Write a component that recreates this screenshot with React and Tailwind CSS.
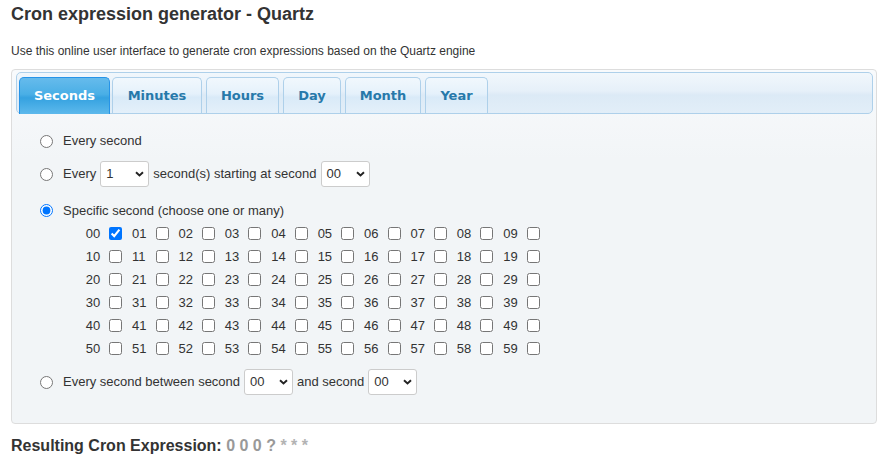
import React from 'react';

const tabs = [
  { name: 'Seconds', w: 'w-[91px]', ml: '' },
  { name: 'Minutes', w: 'w-[90px]', ml: 'ml-[2px]' },
  { name: 'Hours', w: 'w-[73px]', ml: 'ml-[4px]' },
  { name: 'Day', w: 'w-[58px]', ml: 'ml-[4px]' },
  { name: 'Month', w: 'w-[76px]', ml: 'ml-[4px]' },
  { name: 'Year', w: 'w-[63px]', ml: 'ml-[4px]' },
];

function Select({ value }) {
  return (
    <div className="mx-[4px] flex h-[26px] w-[49px] items-center justify-between rounded-[3px] border border-[#cccccc] bg-white pl-[5px] pr-[4px] text-[13px] text-[#333]">
      <span>{value}</span>
      <svg width="9" height="6" viewBox="0 0 9 6">
        <path d="M1 1.2l3.5 3.3L8 1.2" fill="none" stroke="#222" strokeWidth="1.9" />
      </svg>
    </div>
  );
}

function App() {
  const pad = (n) => String(n).padStart(2, '0');
  const rows = [0, 1, 2, 3, 4, 5];

  return (
    <div className="min-h-screen bg-white pl-[11px] font-['Liberation_Sans',Arial,sans-serif] text-[#333]">
      <h1 className="mt-[4px] h-[20px] text-[18px] font-bold leading-[20px]">
        Cron expression generator - Quartz
      </h1>
      <p className="mt-[20px] h-[14px] text-[12px] leading-[14px]">
        Use this online user interface to generate cron expressions based on the Quartz engine
      </p>

      <div className="mt-[11px] w-[866px] rounded-[4px] border border-[#dddddd] bg-[linear-gradient(#f8fafc,#f2f5f7_90px,#f2f5f7)] px-[3.5px] pt-[2px]">
        {/* tab header */}
        <div className="flex h-[42px] rounded-[5px] border border-[#aed0ea] bg-[linear-gradient(#f1f7fc,#e6f0f9_45%,#dceaf6_55%,#e2eef8)] pl-[2.5px] pt-[4px]">
          {tabs.map((t, i) =>
            i === 0 ? (
              <div
                key={t.name}
                className={`${t.w} ${t.ml} z-10 -mb-[1px] flex h-[37px] items-center justify-center rounded-t-[5px] border border-b-0 border-[#2694e8] bg-[linear-gradient(#66bbec,#4aafe6_45%,#35a2e0_55%,#5db9ec)] font-['DejaVu_Sans',Verdana,sans-serif] text-[13px] font-bold text-white`}
              >
                {t.name}
              </div>
            ) : (
              <div
                key={t.name}
                className={`${t.w} ${t.ml} flex h-[36px] items-center justify-center rounded-t-[5px] border border-b-0 border-[#aed0ea] bg-[linear-gradient(#f1f8fd,#e5f1fb_45%,#d9eaf8_55%,#e4f0fa)] font-['DejaVu_Sans',Verdana,sans-serif] text-[13px] font-bold text-[#2779aa]`}
              >
                {t.name}
              </div>
            )
          )}
        </div>

        {/* panel content */}
        <div className="pb-[28px] pl-[24.5px] pt-[14px] text-[13px]">
          <label className="flex h-[26px] items-center">
            <input type="radio" name="sec" className="h-[13px] w-[13px]" />
            <span className="ml-[10px]">Every second</span>
          </label>

          <label className="mt-[7px] flex h-[26px] items-center">
            <input type="radio" name="sec" className="h-[13px] w-[13px]" />
            <span className="ml-[10px]">Every</span>
            <Select value="1" />
            <span>second(s) starting at second</span>
            <Select value="00" />
          </label>

          <label className="mt-[12px] flex h-[23px] items-center">
            <input type="radio" name="sec" defaultChecked className="h-[13px] w-[13px]" />
            <span className="ml-[10px]">Specific second (choose one or many)</span>
          </label>

          <div className="ml-[45.7px] grid grid-cols-[repeat(10,46.4px)]">
            {rows.map((r) =>
              [0, 1, 2, 3, 4, 5, 6, 7, 8, 9].map((c) => {
                const n = r * 10 + c;
                return (
                  <label key={n} className="flex h-[23px] items-center">
                    <span className="w-[23.6px]">{pad(n)}</span>
                    <input
                      type="checkbox"
                      defaultChecked={n === 0}
                      className="h-[13px] w-[13px]"
                    />
                  </label>
                );
              })
            )}
          </div>

          <label className="mt-[9px] flex h-[26px] items-center">
            <input type="radio" name="sec" className="h-[13px] w-[13px]" />
            <span className="ml-[10px]">Every second between second</span>
            <Select value="00" />
            <span>and second</span>
            <Select value="00" />
          </label>
        </div>
      </div>

      <div className="mt-[13px] text-[16px] font-bold leading-[18px]">
        Resulting Cron Expression: <span className="text-[#999]">0 0 0 ?</span>{' '}
        <span className="text-[#b3b3b3]">* * *</span>
      </div>
    </div>
  );
}

export default App;
